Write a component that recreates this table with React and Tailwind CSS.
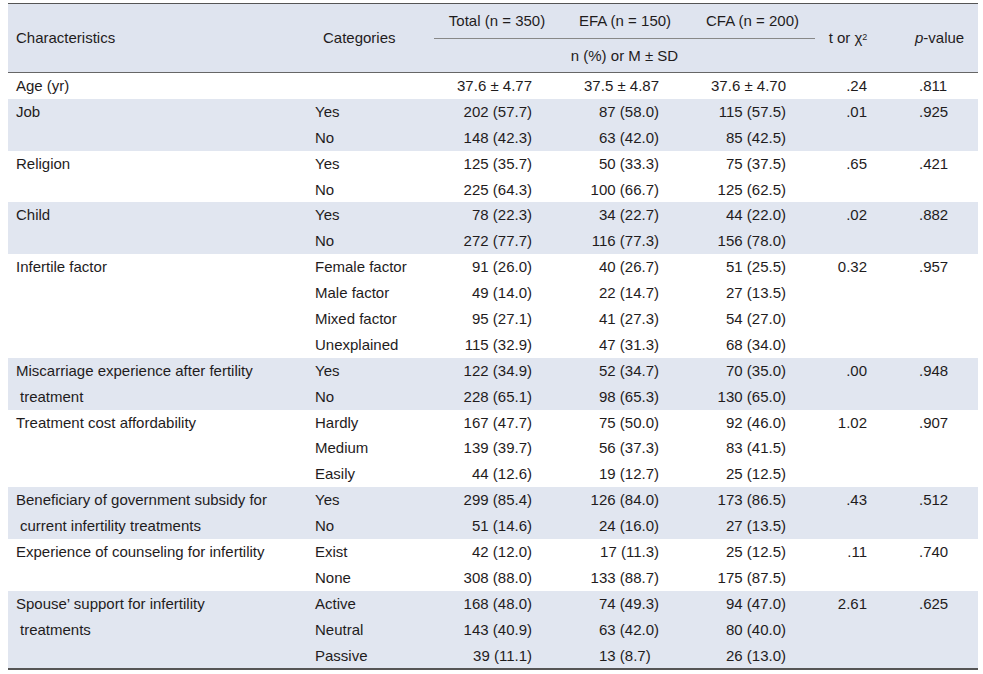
import React from 'react';

const groups = [
  { label: ['Age (yr)'], rows: [['', '37.6 ± 4.77', '37.5 ± 4.87', '37.6 ± 4.70']], t: '.24', p: '.811' },
  { label: ['Job'], rows: [['Yes', '202 (57.7)', '87 (58.0)', '115 (57.5)'], ['No', '148 (42.3)', '63 (42.0)', '85 (42.5)']], t: '.01', p: '.925' },
  { label: ['Religion'], rows: [['Yes', '125 (35.7)', '50 (33.3)', '75 (37.5)'], ['No', '225 (64.3)', '100 (66.7)', '125 (62.5)']], t: '.65', p: '.421' },
  { label: ['Child'], rows: [['Yes', '78 (22.3)', '34 (22.7)', '44 (22.0)'], ['No', '272 (77.7)', '116 (77.3)', '156 (78.0)']], t: '.02', p: '.882' },
  {
    label: ['Infertile factor'],
    rows: [
      ['Female factor', '91 (26.0)', '40 (26.7)', '51 (25.5)'],
      ['Male factor', '49 (14.0)', '22 (14.7)', '27 (13.5)'],
      ['Mixed factor', '95 (27.1)', '41 (27.3)', '54 (27.0)'],
      ['Unexplained', '115 (32.9)', '47 (31.3)', '68 (34.0)'],
    ],
    t: '0.32', p: '.957',
  },
  { label: ['Miscarriage experience after fertility', 'treatment'], rows: [['Yes', '122 (34.9)', '52 (34.7)', '70 (35.0)'], ['No', '228 (65.1)', '98 (65.3)', '130 (65.0)']], t: '.00', p: '.948' },
  {
    label: ['Treatment cost affordability'],
    rows: [
      ['Hardly', '167 (47.7)', '75 (50.0)', '92 (46.0)'],
      ['Medium', '139 (39.7)', '56 (37.3)', '83 (41.5)'],
      ['Easily', '44 (12.6)', '19 (12.7)', '25 (12.5)'],
    ],
    t: '1.02', p: '.907',
  },
  { label: ['Beneficiary of government subsidy for', 'current infertility treatments'], rows: [['Yes', '299 (85.4)', '126 (84.0)', '173 (86.5)'], ['No', '51 (14.6)', '24 (16.0)', '27 (13.5)']], t: '.43', p: '.512' },
  { label: ['Experience of counseling for infertility'], rows: [['Exist', '42 (12.0)', '17 (11.3)', '25 (12.5)'], ['None', '308 (88.0)', '133 (88.7)', '175 (87.5)']], t: '.11', p: '.740' },
  {
    label: ['Spouse\u2019 support for infertility', 'treatments'],
    rows: [
      ['Active', '168 (48.0)', '74 (49.3)', '94 (47.0)'],
      ['Neutral', '143 (40.9)', '63 (42.0)', '80 (40.0)'],
      ['Passive', '39 (11.1)', '13 (8.7)\u2007', '26 (13.0)'],
    ],
    t: '2.61', p: '.625',
  },
];

const cols = 'grid grid-cols-[297px_129px_126px_130px_125px_80px_83px]';

function Group({ g, striped }) {
  const n = g.rows.length;
  return (
    <div className={`${cols} ${striped ? 'bg-[#e1e6f0]' : 'bg-white'}`} style={{ gridTemplateRows: `repeat(${n}, 25.9px)` }}>
      <div className="col-start-1 pl-2" style={{ gridRow: `1 / span ${n}` }}>
        {g.label.map((l, i) => (
          <div key={i} className={i > 0 ? 'pl-1' : ''}>{l}</div>
        ))}
      </div>
      {g.rows.map((r, i) => (
        <React.Fragment key={i}>
          <div className="col-start-2 pl-[10px]" style={{ gridRow: i + 1 }}>{r[0]}</div>
          <div className="col-start-3 pr-[28px] text-right whitespace-pre" style={{ gridRow: i + 1 }}>{r[1]}</div>
          <div className="col-start-4 pr-[31px] text-right whitespace-pre" style={{ gridRow: i + 1 }}>{r[2]}</div>
          <div className="col-start-5 pr-[29px] text-right whitespace-pre" style={{ gridRow: i + 1 }}>{r[3]}</div>
        </React.Fragment>
      ))}
      <div className="col-start-6 row-start-1 pr-[28px] text-right">{g.t}</div>
      <div className="col-start-7 row-start-1 pl-[24px]">{g.p}</div>
    </div>
  );
}

export default function App() {
  return (
    <div className="bg-white min-h-[674px] pt-[3px] pl-2 font-['Liberation_Sans',Arial,sans-serif] text-[15px] leading-[25.9px] text-[#1f1c1d]">
      <div className="w-[970px] border-t border-b-2 border-t-[#555] border-b-[#555]">
        {/* Header */}
        <div className={`${cols} grid-rows-[34px_34px] bg-[#dfe4ef] border-b border-[#666]`}>
          <div className="row-span-2 col-start-1 row-start-1 flex items-center pl-2">Characteristics</div>
          <div className="row-span-2 col-start-2 row-start-1 flex items-center pl-[18px]">Categories</div>
          <div className="col-start-3 row-start-1 flex items-center justify-center">Total (n = 350)</div>
          <div className="col-start-4 row-start-1 flex items-center justify-center">EFA (n = 150)</div>
          <div className="col-start-5 row-start-1 flex items-center justify-center">CFA (n = 200)</div>
          <div className="col-start-3 col-span-3 row-start-2 flex items-center justify-center border-t border-[#888]">n (%) or M ± SD</div>
          <div className="row-span-2 col-start-6 row-start-1 flex items-center justify-center pr-[14px]">
            t or χ<sup className="text-[9px] relative -top-[1px]">2</sup>
          </div>
          <div className="row-span-2 col-start-7 row-start-1 flex items-center pl-[20px]">
            <i>p</i>-value
          </div>
        </div>
        {/* Body */}
        {groups.map((g, i) => (
          <Group key={i} g={g} striped={i % 2 === 1} />
        ))}
      </div>
    </div>
  );
}
